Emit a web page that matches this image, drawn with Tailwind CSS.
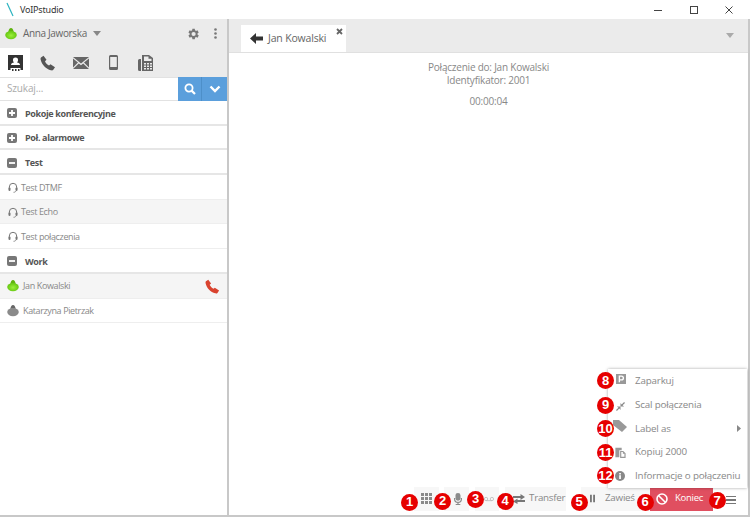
<!DOCTYPE html>
<html lang="en">
<head>
  <meta charset="UTF-8" />
  <title>VoIPstudio</title>
  <script src="https://cdn.jsdelivr.net/npm/@tailwindcss/browser@4"></script>
</head>
<body class="bg-white font-['Open_Sans',sans-serif] text-[#777] overflow-hidden">
<div class="relative w-[750px] h-[517px] flex flex-col overflow-hidden">

  <!-- Window title bar -->
  <div class="h-[19px] flex items-center shrink-0 bg-white">
    <svg class="ml-[6px] w-[10px] h-[15px]" viewBox="0 0 10 15"><path d="M1 1 L7 14" stroke="#2bb3c0" stroke-width="1.2" fill="none"/></svg>
    <span class="ml-[4px] text-[9px] tracking-[-0.2px] text-[#333] font-['Noto_Sans',sans-serif]">VoIPstudio</span>
    <div class="ml-auto flex items-center">
      <svg class="w-[10px] h-[10px] mr-[26px]" viewBox="0 0 10 10"><path d="M1 5.5H9" stroke="#444" stroke-width="1"/></svg>
      <svg class="w-[10px] h-[10px] mr-[25px]" viewBox="0 0 10 10"><rect x="1.5" y="1.5" width="7" height="7" fill="none" stroke="#444"/></svg>
      <svg class="w-[10px] h-[10px] mr-[16px]" viewBox="0 0 10 10"><path d="M1.5 1.5L8.5 8.5M8.5 1.5L1.5 8.5" stroke="#444" stroke-width="1"/></svg>
    </div>
  </div>

  <div class="flex flex-1 min-h-0 border-b-2 border-[#c8c8c8]">
    <!-- Sidebar -->
    <div class="w-[227px] shrink-0 flex flex-col">
      <div class="h-[29px] bg-[#ebebeb] flex items-center shrink-0 pl-[5px]">
        <svg class="w-[12px] h-[12px]" viewBox="0 0 11 11"><defs><radialGradient id="grn" cx="50%" cy="55%" r="60%"><stop offset="0" stop-color="#9cf03c"/><stop offset="1" stop-color="#5cc00a"/></radialGradient></defs><path d="M5.5 0C6.8 0 7.5 1.2 8 3.5H3C3.5 1.2 4.2 0 5.5 0Z" fill="#5fb30f"/><ellipse cx="5.5" cy="6.5" rx="5.3" ry="3.8" fill="url(#grn)"/></svg>
        <span class="ml-[6px] text-[10px] tracking-[-0.35px] text-[#666]">Anna Jaworska</span>
        <svg class="ml-[6px] w-[8px] h-[5px]" viewBox="0 0 8 5"><path d="M0 0H8L4 5Z" fill="#888"/></svg>
        <svg class="ml-auto w-[12px] h-[12px]" viewBox="2 2 20 20"><path fill="#777" d="M19.4 13a7.5 7.5 0 0 0 0-2l2.100-1.600-2-3.500-2.500 1a7.600 7.600 0 0 0-1.700-1L15 3.300h-4l-.4 2.600a7.600 7.600 0 0 0-1.700 1l-2.500-1-2 3.500L6.500 11a7.500 7.500 0 0 0 0 2l-2.100 1.600 2 3.500 2.500-1a7.600 7.600 0 0 0 1.700 1l.4 2.600h4l.4-2.600a7.600 7.600 0 0 0 1.700-1l2.500 1 2-3.500ZM13 15.500a3.500 3.500 0 1 1 0-7 3.500 3.500 0 0 1 0 7Z"/></svg>
        <svg class="ml-[15px] mr-[10px] w-[3px] h-[11px]" viewBox="0 0 3 11"><circle cx="1.5" cy="1.5" r="1.3" fill="#777"/><circle cx="1.5" cy="5.5" r="1.3" fill="#777"/><circle cx="1.5" cy="9.5" r="1.3" fill="#777"/></svg>
      </div>
      <div class="h-[29px] bg-[#ebebeb] flex shrink-0">
        <div class="w-[30px] bg-white flex items-center justify-center">
          <svg class="w-[15px] h-[16px]" viewBox="0 0 15 16"><path fill="#333" d="M0 0H15V15H12.500V13H2.500V15H0ZM7.500 2.500a2.500 2.500 0 0 0-2.500 2.700c0 1 .5 1.800 1 2.300-1.700.3-3 .9-3 2.500h9c0-1.600-1.300-2.200-3-2.500.5-.5 1-1.300 1-2.300a2.500 2.500 0 0 0-2.500-2.700Z"/><path fill="#333" d="M4 14H5.500V16H4ZM7 14H8.500V16H7ZM10 14H11.500V16H10Z"/></svg>
        </div>
        <div class="w-[35px] flex items-center justify-center">
          <svg class="w-[16px] h-[16px]" viewBox="0 0 16 16"><path fill="#555" d="M1 2.500 3.500.7l3 4-1.500 1.500c.5 1.500 2.300 3.500 4 4.300l1.500-1.300 4.500 3-1.700 2.600c-.5.700-1.500.8-2.400.5C6 14 2 10 .7 4.800.5 3.900.5 3 1 2.500Z"/></svg>
        </div>
        <div class="w-[32px] flex items-center justify-center">
          <svg class="w-[16px] h-[12px]" viewBox="0 0 16 12"><path fill="#666" d="M0 0H16L8 6.500ZM0 1.500V10.500L5 5.500ZM16 1.500V10.500L11 5.500ZM0 12 5.800 6.500 8 8.300 10.200 6.500 16 12Z"/></svg>
        </div>
        <div class="w-[32px] flex items-center justify-center">
          <svg class="w-[9px] h-[15px]" viewBox="0 0 9 15"><path fill="#666" fill-rule="evenodd" d="M1.500 0H7.500A1.500 1.500 0 0 1 9 1.500V13.500A1.500 1.500 0 0 1 7.500 15H1.500A1.500 1.500 0 0 1 0 13.500V1.500A1.500 1.500 0 0 1 1.500 0ZM1.200 2V12H7.800V2Z"/></svg>
        </div>
        <div class="w-[33px] flex items-center justify-center">
          <svg class="w-[16px] h-[16px]" viewBox="0 0 16 16"><path fill="#666" fill-rule="evenodd" d="M0 5.500A1.500 1.500 0 0 1 1.500 4H3V16H1.500A1.500 1.500 0 0 1 0 14.500ZM4 6V0H11L15 3V16H4ZM6 1.500V6H13.500V3.800H10.500V1.500ZM6 8V9.500H8V8ZM9 8V9.500H11V8ZM12 8V9.500H14V8ZM6 10.500V12H8V10.500ZM9 10.500V12H11V10.500ZM12 10.500V12H14V10.500ZM6 13V14.500H8V13ZM9 13V14.500H11V13ZM12 13V14.500H14V13Z"/></svg>
        </div>
      </div>
      <div class="h-[23.5px] flex shrink-0 border-y border-[#e2e2e2] bg-white">
        <div class="flex-1 pl-[7px] text-[10px] tracking-[-0.15px] leading-[21px] text-[#aaa]">Szukaj...</div>
        <div class="w-[24px] bg-[#5b9fdc] flex items-center justify-center border-r border-[#4d8fc9] -my-px">
          <svg class="w-[12px] h-[12px]" viewBox="0 0 12 12"><circle cx="5" cy="5" r="3.6" fill="none" stroke="#fff" stroke-width="1.8"/><path d="M7.6 7.6 11 11" stroke="#fff" stroke-width="2.2"/></svg>
        </div>
        <div class="w-[25px] bg-[#5b9fdc] flex items-center justify-center -my-px">
          <svg class="w-[12px] h-[8px]" viewBox="0 0 12 8"><path d="M1.5 1.5 6 6l4.5-4.5" fill="none" stroke="#fff" stroke-width="2.4"/></svg>
        </div>
      </div>

      <div class="flex flex-col mt-[0.5px]">
        <div class="h-[24.7px] pt-[2px] flex items-center pl-[7px] border-b-2 border-[#e6e6e6]">
          <svg class="w-[10px] h-[10px]" viewBox="0 0 10 10"><rect width="10" height="10" rx="2" fill="#777"/><path d="M5 2V8M2 5H8" stroke="#fff" stroke-width="1.8"/></svg>
          <span class="ml-[8px] text-[9px] tracking-[-0.36px] font-bold text-[#555]">Pokoje konferencyjne</span>
        </div>
        <div class="h-[24.7px] pt-[2px] flex items-center pl-[7px] border-b-2 border-[#e6e6e6]">
          <svg class="w-[10px] h-[10px]" viewBox="0 0 10 10"><rect width="10" height="10" rx="2" fill="#777"/><path d="M5 2V8M2 5H8" stroke="#fff" stroke-width="1.8"/></svg>
          <span class="ml-[8px] text-[9px] tracking-[-0.36px] font-bold text-[#555]">Poł. alarmowe</span>
        </div>
        <div class="h-[24.7px] pt-[2px] flex items-center pl-[7px] border-b-2 border-[#e6e6e6]">
          <svg class="w-[10px] h-[10px]" viewBox="0 0 10 10"><rect width="10" height="10" rx="2" fill="#777"/><path d="M2 5H8" stroke="#fff" stroke-width="1.8"/></svg>
          <span class="ml-[8px] text-[9px] tracking-[-0.36px] font-bold text-[#555]">Test</span>
        </div>
        <div class="h-[24.7px] pt-[1px] flex items-center pl-[8px] border-b border-[#eee]">
          <svg class="w-[10px] h-[11px]" viewBox="0 0 10 11"><path d="M1.3 7.5V5a3.7 3.7 0 0 1 7.4 0V7.5" fill="none" stroke="#777" stroke-width="1"/><rect x="0.5" y="5.5" width="2" height="3.5" rx="1" fill="#777"/><rect x="7.5" y="5.5" width="2" height="3.5" rx="1" fill="#777"/><path d="M8 9C7.5 10 6.5 10.3 5.5 10.3" fill="none" stroke="#777" stroke-width=".8"/></svg>
          <span class="ml-[3px] text-[9px] tracking-[-0.38px] text-[#888]">Test DTMF</span>
        </div>
        <div class="h-[24.7px] pt-[1px] flex items-center pl-[8px] border-b border-[#eee] bg-[#f5f5f5]">
          <svg class="w-[10px] h-[11px]" viewBox="0 0 10 11"><path d="M1.3 7.5V5a3.7 3.7 0 0 1 7.4 0V7.5" fill="none" stroke="#777" stroke-width="1"/><rect x="0.5" y="5.5" width="2" height="3.5" rx="1" fill="#777"/><rect x="7.5" y="5.5" width="2" height="3.5" rx="1" fill="#777"/><path d="M8 9C7.5 10 6.5 10.3 5.5 10.3" fill="none" stroke="#777" stroke-width=".8"/></svg>
          <span class="ml-[3px] text-[9px] tracking-[-0.38px] text-[#888]">Test Echo</span>
        </div>
        <div class="h-[24.7px] pt-[1px] flex items-center pl-[8px] border-b border-[#eee]">
          <svg class="w-[10px] h-[11px]" viewBox="0 0 10 11"><path d="M1.3 7.5V5a3.7 3.7 0 0 1 7.4 0V7.5" fill="none" stroke="#777" stroke-width="1"/><rect x="0.5" y="5.5" width="2" height="3.5" rx="1" fill="#777"/><rect x="7.5" y="5.5" width="2" height="3.5" rx="1" fill="#777"/><path d="M8 9C7.5 10 6.5 10.3 5.5 10.3" fill="none" stroke="#777" stroke-width=".8"/></svg>
          <span class="ml-[3px] text-[9px] tracking-[-0.38px] text-[#888]">Test połączenia</span>
        </div>
        <div class="h-[24.7px] pt-[2px] flex items-center pl-[7px] border-b-2 border-[#e6e6e6]">
          <svg class="w-[10px] h-[10px]" viewBox="0 0 10 10"><rect width="10" height="10" rx="2" fill="#777"/><path d="M2 5H8" stroke="#fff" stroke-width="1.8"/></svg>
          <span class="ml-[8px] text-[9px] tracking-[-0.36px] font-bold text-[#555]">Work</span>
        </div>
        <div class="h-[24.7px] pt-[1px] flex items-center pl-[7px] border-b border-[#eee] bg-[#f5f5f5]">
          <svg class="w-[12px] h-[12px]" viewBox="0 0 11 11"><path d="M5.5 0C6.8 0 7.5 1.2 8 3.5H3C3.5 1.2 4.2 0 5.5 0Z" fill="#5fb30f"/><ellipse cx="5.5" cy="6.5" rx="5.3" ry="3.8" fill="url(#grn)"/></svg>
          <span class="ml-[4px] text-[9px] tracking-[-0.38px] text-[#888]">Jan Kowalski</span>
          <svg class="ml-auto mr-[7px] w-[15px] h-[15px]" viewBox="0 0 16 16"><path fill="#d9432f" d="M1 2.500 3.500.7l3 4-1.500 1.500c.5 1.500 2.300 3.500 4 4.300l1.500-1.300 4.500 3-1.700 2.600c-.5.700-1.500.8-2.400.5C6 14 2 10 .7 4.800.5 3.900.5 3 1 2.500Z"/></svg>
        </div>
        <div class="h-[24.7px] pt-[1px] flex items-center pl-[7px] border-b border-[#eee]">
          <svg class="w-[12px] h-[12px]" viewBox="0 0 11 11"><path d="M5.5 0C6.8 0 7.5 1.2 8 3.5H3C3.5 1.2 4.2 0 5.5 0Z" fill="#666"/><ellipse cx="5.5" cy="6.5" rx="5.3" ry="3.8" fill="#8a8a8a"/></svg>
          <span class="ml-[4px] text-[9px] tracking-[-0.38px] text-[#888]">Katarzyna Pietrzak</span>
        </div>
      </div>
    </div>

    <!-- Divider -->
    <div class="w-[2px] shrink-0 bg-[#c8c8c8]"></div>

    <!-- Main -->
    <div class="flex-1 min-w-0 flex flex-col border-r-2 border-[#c8c8c8]">
      <div class="h-[34px] shrink-0 bg-[#ebebeb] border-b border-[#e0e0e0] flex items-end pl-[12px]">
        <div class="relative w-[105px] h-[27px] bg-white flex items-center pl-[9px]">
          <svg class="w-[13px] h-[11px]" viewBox="0 0 13 11"><path fill="#333" d="M0 5.5 6 0V3.5H13V7.5H6V11Z"/></svg>
          <span class="ml-[5px] text-[10.5px] tracking-[-0.17px] text-[#666]">Jan Kowalski</span>
          <svg class="absolute right-[3px] top-[3px] w-[7px] h-[7px]" viewBox="0 0 7 7"><path d="M1 1 6 6M6 1 1 6" stroke="#666" stroke-width="1.8"/></svg>
        </div>
        <svg class="ml-auto mr-[14px] mb-[14px] w-[8px] h-[5px]" viewBox="0 0 8 5"><path d="M0 0H8L4 5Z" fill="#aaa"/></svg>
      </div>
      <div class="flex-1 relative flex flex-col">
        <div class="pt-[8px] text-center text-[10px] tracking-[-0.22px] leading-[13px] text-[#888]">
          <p>Połączenie do: Jan Kowalski</p>
          <p>Identyfikator: 2001</p>
          <p class="mt-[8px]">00:00:04</p>
        </div>

        <!-- Call toolbar -->
        <div class="mt-auto h-[30px] pb-[3px] flex items-center text-[9.8px] tracking-[-0.25px] text-[#888] pl-[185px]">
          <div class="relative w-[25px] h-[24px] bg-[#f7f7f7] flex items-center justify-center">
            <svg class="w-[11px] h-[11px]" viewBox="0 0 11 11"><path fill="#8a8a8a" d="M0 0H3V3H0ZM4 0H7V3H4ZM8 0H11V3H8ZM0 4H3V7H0ZM4 4H7V7H4ZM8 4H11V7H8ZM0 8H3V11H0ZM4 8H7V11H4ZM8 8H11V11H8Z"/></svg>
            <span class="absolute left-[-13px] top-[7px] w-[17px] h-[17px] rounded-full bg-[#e60000] text-white text-[13px] tracking-normal font-bold font-['Liberation_Sans',sans-serif] flex items-center justify-center">1</span>
          </div>
          <div class="relative ml-[5px] w-[25px] h-[24px] bg-[#f7f7f7] flex items-center justify-center">
            <svg class="w-[10px] h-[12px] ml-[2px]" viewBox="0 0 9 13"><rect x="1.8" y="0" width="5.4" height="8.5" rx="2.7" fill="#8a8a8a"/><path d="M.8 5.5V6.5a3.7 3.7 0 0 0 7.4 0V5.5M4.5 10.5V12.5M2 12.5H7" fill="none" stroke="#8a8a8a" stroke-width="1.3"/></svg>
            <span class="absolute left-[-10px] top-[6px] w-[17px] h-[17px] rounded-full bg-[#e60000] text-white text-[13px] tracking-normal font-bold font-['Liberation_Sans',sans-serif] flex items-center justify-center">2</span>
          </div>
          <div class="relative ml-[6px] w-[24px] h-[24px] bg-[#f7f7f7] flex items-center justify-center">
            <svg class="w-[10px] h-[6px] ml-[4px]" viewBox="0 0 12 6"><circle cx="2.5" cy="3" r="2" fill="none" stroke="#bbb"/><circle cx="9.5" cy="3" r="2" fill="none" stroke="#bbb"/><path d="M2.5 5H9.5" stroke="#bbb"/></svg>
            <span class="absolute left-[-8px] top-[4px] w-[17px] h-[17px] rounded-full bg-[#e60000] text-white text-[13px] tracking-normal font-bold font-['Liberation_Sans',sans-serif] flex items-center justify-center">3</span>
          </div>
          <div class="relative ml-[6px] w-[61px] h-[24px] bg-[#f7f7f7] flex items-center pl-[8px]">
            <svg class="w-[12px] h-[10px]" viewBox="0 0 12 10"><path fill="#777" d="M0 2H7.5V0L12 3 7.5 6V4H0ZM12 6H4.5V4.5L0 7.5 4.5 10V8H12Z"/></svg>
            <span class="ml-[4px]">Transfer</span>
            <span class="absolute left-[-8.5px] top-[6px] w-[17px] h-[17px] rounded-full bg-[#e60000] text-white text-[13px] tracking-normal font-bold font-['Liberation_Sans',sans-serif] flex items-center justify-center">4</span>
          </div>
          <div class="relative ml-[15px] w-[69px] h-[24px] bg-[#f7f7f7] flex items-center pl-[9px]">
            <svg class="w-[5px] h-[9px]" viewBox="0 0 6 9"><path fill="#777" d="M0 0H2.2V9H0ZM3.8 0H6V9H3.8Z"/></svg>
            <span class="ml-[10px]">Zawieś</span>
            <span class="absolute left-[-10.5px] top-[7px] w-[17px] h-[17px] rounded-full bg-[#e60000] text-white text-[13px] tracking-normal font-bold font-['Liberation_Sans',sans-serif] flex items-center justify-center">5</span>
          </div>
          <div class="relative w-[63px] h-[24px] bg-[#e04f60] flex items-center pl-[6px] text-white text-[9.5px]">
            <svg class="w-[12px] h-[12px]" viewBox="0 0 12 12"><circle cx="6" cy="6" r="5" fill="none" stroke="#fff" stroke-width="1.6"/><path d="M2.5 2.5 9.5 9.5" stroke="#fff" stroke-width="1.6"/></svg>
            <span class="ml-[7px]">Koniec</span>
            <span class="absolute left-[-13.5px] top-[7px] w-[17px] h-[17px] rounded-full bg-[#e60000] text-white text-[13px] tracking-normal font-bold font-['Liberation_Sans',sans-serif] flex items-center justify-center">6</span>
          </div>
          <div class="relative ml-[13px] mt-[3px] w-[10px] flex flex-col gap-[2px]">
            <div class="h-[1.5px] bg-[#777]"></div><div class="h-[1.5px] bg-[#777]"></div><div class="h-[1.5px] bg-[#777]"></div>
            <span class="absolute left-[-17.5px] top-[-4px] w-[17px] h-[17px] rounded-full bg-[#e60000] text-white text-[13px] tracking-normal font-bold font-['Liberation_Sans',sans-serif] flex items-center justify-center">7</span>
          </div>
        </div>
      </div>
    </div>
  </div>

  <!-- Call options menu -->
  <div class="absolute left-[608px] top-[369px] w-[139px] h-[119px] pt-[1px] bg-white shadow-[0_0_3px_rgba(0,0,0,0.35)] flex flex-col text-[9.8px] tracking-[-0.17px] text-[#888]">
    <div class="relative h-[23.7px] flex items-center pl-[27px]">
      <svg class="absolute left-[8px] top-[4px] w-[10px] h-[10px]" viewBox="0 0 11 11"><rect width="11" height="11" fill="#999"/><path d="M3.7 9V2.3H6a2 2 0 0 1 0 4.2H3.7" fill="none" stroke="#fff" stroke-width="1.5"/></svg>
      <span class="absolute left-[-11px] top-[2px] w-[17px] h-[17px] rounded-full bg-[#e60000] text-white text-[13px] tracking-normal font-bold font-['Liberation_Sans',sans-serif] flex items-center justify-center">8</span>
      <span>Zaparkuj</span>
    </div>
    <div class="relative h-[23.7px] flex items-center pl-[27px]">
      <svg class="absolute left-[8px] top-[8px] w-[9px] h-[9px]" viewBox="0 0 10 10"><path fill="#888" d="M10 1 7.3 3.7 9 5H5V1L6.3 2.7 9 0ZM0 9 2.7 6.3 1 5H5V9L3.7 7.3 1 10Z"/></svg>
      <span class="absolute left-[-11px] top-[3px] w-[17px] h-[17px] rounded-full bg-[#e60000] text-white text-[13px] tracking-normal font-bold font-['Liberation_Sans',sans-serif] flex items-center justify-center">9</span>
      <span>Scal połączenia</span>
    </div>
    <div class="relative h-[23.7px] flex items-center pl-[27px]">
      <svg class="absolute left-[5px] top-[3px] w-[15px] h-[12px]" viewBox="0 0 15 12"><path fill="#999" d="M0 0H6L14 7 9 12 0 5Z"/></svg>
      <span class="absolute left-[-11px] top-[3px] w-[17px] h-[17px] rounded-full bg-[#e60000] text-white text-[13px] tracking-normal font-bold font-['Liberation_Sans',sans-serif] flex items-center justify-center">10</span>
      <span>Label as</span>
      <svg class="absolute right-[6px] top-[8px] w-[4px] h-[7px]" viewBox="0 0 4 7"><path d="M0 0 4 3.5 0 7Z" fill="#888"/></svg>
    </div>
    <div class="relative h-[23.7px] flex items-center pl-[27px]">
      <svg class="absolute left-[6px] top-[6px] w-[13px] h-[11px]" viewBox="0 0 13 14"><path fill="#999" d="M0 1H8V4H5V13H0ZM6 5H10L13 8V14H6ZM7.5 6.5V12.5H11.5V8.5H9.5V6.5Z" fill-rule="evenodd"/></svg>
      <span class="absolute left-[-11px] top-[3px] w-[17px] h-[17px] rounded-full bg-[#e60000] text-white text-[13px] tracking-normal font-bold font-['Liberation_Sans',sans-serif] flex items-center justify-center">11</span>
      <span>Kopiuj 2000</span>
    </div>
    <div class="relative h-[23.7px] flex items-center pl-[27px]">
      <svg class="absolute left-[7px] top-[7px] w-[10px] h-[10px]" viewBox="0 0 10 10"><circle cx="5" cy="5" r="5" fill="#888"/><rect x="4.2" y="4.2" width="1.7" height="3.8" fill="#fff"/><rect x="4.2" y="2" width="1.7" height="1.5" fill="#fff"/></svg>
      <span class="absolute left-[-11px] top-[3px] w-[17px] h-[17px] rounded-full bg-[#e60000] text-white text-[13px] tracking-normal font-bold font-['Liberation_Sans',sans-serif] flex items-center justify-center">12</span>
      <span class="whitespace-nowrap">Informacje o połączeniu</span>
    </div>
  </div>
</div>
</body>
</html>
